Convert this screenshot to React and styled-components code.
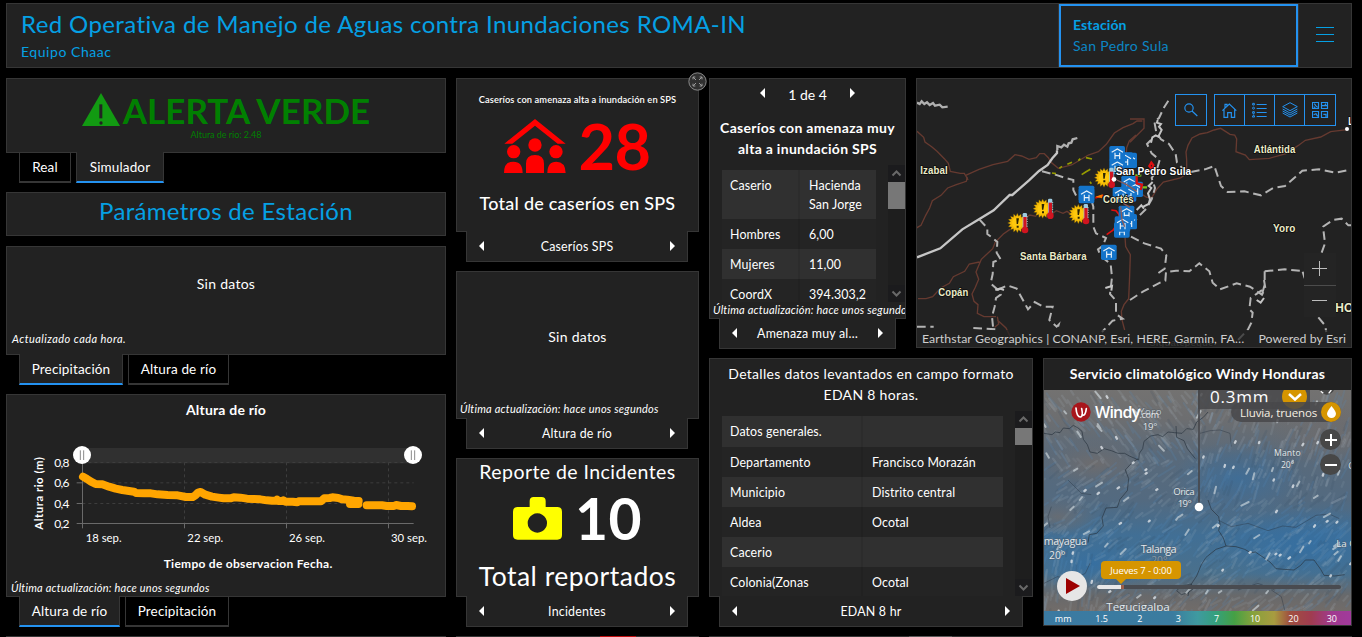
import React from 'react';
import styled, { createGlobalStyle, css } from 'styled-components';

const BORDER = '#363636';
const PANEL = '#222222';
const BLUE = '#2492f0';
const SKY = '#05a0e4';

const GlobalStyle = createGlobalStyle`
  * { box-sizing: border-box; }
  html, body { margin: 0; background: #000; overflow: hidden; }
  body { font-family: Lato, "Liberation Sans", sans-serif; color: #fff; font-size: 14px; letter-spacing: 0.27px; }
  svg { display: block; }
`;

/* ---------- layout ---------- */
const Page = styled.div`
  width: 1362px; height: 637px; overflow: hidden; background: #000;
  padding: 3px 10px 0 6px; display: flex; flex-direction: column;
`;
const Header = styled.header`
  height: 65px; flex: none; background: ${PANEL}; border: 1px solid ${BORDER};
  display: flex; color: ${SKY};
`;
const Titles = styled.div`flex: 1; padding: 5px 0 0 14px;`;
const Title = styled.h1`
  margin: 0; font-size: 24px; line-height: 30px; font-weight: 400; letter-spacing: 0.39px; white-space: nowrap;
`;
const Subtitle = styled.div`font-size: 14px; line-height: 20px; margin-top: 3px; letter-spacing: 0.55px;`;
const Station = styled.div`
  height: 63px; border: 2px solid ${BLUE}; outline: 1px solid ${BORDER}; width: 239px;
  padding: 8px 0 0 12px; line-height: 21px; white-space: nowrap;
`;
const StationName = styled.div`color: #0c86c4; letter-spacing: 0.35px;`;
const StationLabel = styled.div`font-weight: 700; letter-spacing: 0.12px;`;
const MenuButton = styled.div`
  width: 53px; display: flex; flex-direction: column; align-items: center; justify-content: center; gap: 6px; padding-bottom: 2px;
  i { width: 18px; height: 1px; background: ${SKY}; }
`;
const Main = styled.main`display: flex; gap: 10px; margin-top: 10px; height: 549px; flex: none;`;
const Column = styled.div`width: ${p => p.$w}px; display: flex; flex-direction: column; gap: 9px; flex: none;`;
const RowPair = styled.div`display: flex; gap: 10px;`;
const Stack = styled.section`
  position: relative; width: ${p => p.$w || '100%'}; margin-top: ${p => p.$mt || 0}px;
  display: flex; flex-direction: column; flex: none;
`;
const Panel = styled.div`
  height: ${p => p.$h}px; background: ${PANEL}; border: 1px solid ${BORDER};
  display: flex; flex-direction: column; overflow: hidden; flex: none;
`;
const PeekRow = styled.div`
  display: flex; gap: 10px; margin-top: 9px; height: 1px; flex: none;
`;
const Peek = styled.div`
  width: ${p => p.$w}px; display: flex; background: ${BORDER}; padding-left: ${p => p.$pl || 0}px;
`;
const PeekMark = styled.i`width: ${p => p.$w}px; background: ${p => p.$c};`;

/* ---------- tabs ---------- */
const Tabs = styled.nav`display: flex; gap: 5px; margin: -1px 0 0 13px; height: 31px;`;
const Tab = styled.div`
  border: 1px solid ${BORDER}; border-bottom: 2px solid ${p => (p.$on ? BLUE : BORDER)};
  border-top: ${p => (p.$on ? '0' : `1px solid ${BORDER}`)};
  background: ${p => (p.$on ? PANEL : '#000')};
  width: ${p => p.$w}px; text-align: center; line-height: ${p => (p.$on ? 30 : 28)}px; font-size: 13.5px; letter-spacing: 0.15px;
`;
const Pager = styled.nav`
  height: 31px; margin: -1px 10px 0; background: ${PANEL}; border: 1px solid ${BORDER}; border-top: 0;
  display: flex; align-items: center; justify-content: space-between; padding: 0 12px; font-size: 12.4px; letter-spacing: 0.2px;
  white-space: nowrap; margin-right: ${p => p.$mr ?? 11}px;
`;
const Arrow = styled.i`
  width: 0; height: 0; border: 5px solid transparent; flex: none;
  ${p => p.$right
    ? css`border-left: 5.5px solid #fff; border-right: 0;`
    : css`border-right: 5.5px solid #fff; border-left: 0;`}
`;
const PagerBar = ({ children, mr }) => (
  <Pager $mr={mr}><Arrow /><span>{children}</span><Arrow $right /></Pager>
);

/* ---------- left column ---------- */
const AlertRow = styled.div`
  display: flex; justify-content: center; margin-top: 10px; height: 41px; padding-right: 0;
  font-size: 35px; line-height: 42px; font-weight: 700; color: #018001; letter-spacing: 0.05px; gap: 3px;
  svg { margin-top: 4px; }
`;
const AlertNote = styled.div`
  font-size: 9px; line-height: 10px; color: #018001; text-align: center; letter-spacing: -0.03px;
`;
const SectionTitle = styled.h2`
  margin: 0; font-size: 24px; line-height: 36px; font-weight: 400; color: ${SKY}; text-align: center; letter-spacing: 0.32px;
`;
const Empty = styled.div`height: ${p => p.$h}px; display: flex; align-items: center; justify-content: center; flex: none;`;
const Note = styled.div`
  font-style: italic; font-size: 11px; line-height: 16px; letter-spacing: ${p => p.$ls || 0.22}px; white-space: nowrap;
  padding-left: ${p => p.$pl || 4}px; margin-top: ${p => p.$mt || 0}px; overflow: hidden;
`;
const ChartTitle = styled.div`font-weight: 700; line-height: 30px; text-align: center; letter-spacing: 0.2px;`;

/* ---------- indicators ---------- */
const Indicator = styled.div`display: flex; flex-direction: column; align-items: center; white-space: nowrap;`;
const Caption = styled.div`
  margin-top: ${p => p.$mt}px; line-height: ${p => p.$lh}px; font-size: ${p => p.$fs}px; font-weight: ${p => p.$fw || 400};
  letter-spacing: ${p => p.$ls}px;
`;
const Figure = styled.div`
  height: 56px; display: flex; align-items: center; gap: ${p => p.$gap}px; margin-top: ${p => p.$mt}px;
  color: ${p => p.$c}; font-size: ${p => p.$fs}px; line-height: 56px; font-weight: ${p => p.$fw}; letter-spacing: ${p => p.$ls || 0}px;
`;
const ExpandBadge = styled.div`
  position: absolute; right: -8px; top: -6px; width: 19px; height: 19px; z-index: 2;
`;

/* ---------- details ---------- */
const DetailPager = styled.div`
  display: flex; align-items: center; justify-content: center; gap: 23px; height: 28px; letter-spacing: 0; flex: none;
  span { padding-top: 2px; }
`;
const DetailTitle = styled.div`
  margin-top: ${p => p.$mt}px; line-height: 21px; height: 42px; text-align: center; font-weight: ${p => p.$fw}; letter-spacing: 0.3px; flex: none;
`;
const ScrollArea = styled.div`
  display: flex; justify-content: space-between; margin-top: 6px; height: ${p => p.$h}px; padding-left: 12px; overflow: hidden; flex: none;
`;
const Table = styled.div`width: ${p => p.$w}px; margin-top: 5px; font-size: 12.4px; line-height: 19px; letter-spacing: 0.12px;`;
const TableRow = styled.div`
  display: grid; grid-template-columns: ${p => p.$c1}px 1fr; min-height: ${p => p.$min || 30}px;
  background: ${p => (p.$odd ? '#303030' : '#242424')};
  div { padding: 6px 0 5px 8px; white-space: pre-line; }
  div + div { border-left: 2px solid ${p => (p.$odd ? '#2c2c2c' : '#212121')}; padding-left: 9px; white-space: ${p => p.$wrap ? 'pre-line' : 'nowrap'}; }
`;
const Scrollbar = styled.div`
  width: 17px; background: #1e1e1e; display: flex; flex-direction: column; align-items: center;
  svg { flex: none; background: #1b1b1d; }
`;
const Thumb = styled.i`width: 17px; height: ${p => p.$h}px; background: #777; margin-bottom: auto; flex: none;`;

const ScrollRail = ({ thumb }) => (
  <Scrollbar>
    <svg width="17" height="17"><path d="M4.5 10.5l4-4 4 4" fill="none" stroke="#696969" strokeWidth="2" /></svg>
    <Thumb $h={thumb} />
    <svg width="17" height="17"><path d="M4.5 6.5l4 4 4-4" fill="none" stroke="#696969" strokeWidth="2" /></svg>
  </Scrollbar>
);

const DetailTable = ({ rows, w, c1, firstMin }) => (
  <Table $w={w}>
    {rows.map(([k, v], i) => (
      <TableRow key={k} $odd={i % 2 === 0} $c1={c1} $min={i === 0 ? firstMin : 30} $wrap={i === 0}>
        <div>{k}</div><div>{v}</div>
      </TableRow>
    ))}
  </Table>
);

/* ---------- chart ---------- */
const riverLevel = 'M249 260l12 7 12 8 14 7 20 1 20 7 20 6 20 4 20 3 15 2 6 4 25 1 20 0 20 3 30 2 30 1 25 5 20 0 8-5 8-8 8-2 14 8 20 6 20 3 15 2 20 0 10-3 20 1 20 3 20 1 20 1 20 3 15 1 12 0 3-3 4 4 12 0 3-2 6 4 22 0 14 2 4-3 20 0 35 0 12 0 10-9 16-1 8-2 18 2 12 4 15 1 20 3 14 1';

const RiverChart = () => (
  <svg width="438" height="155" viewBox="21 105 1314 465" fontFamily="Lato, sans-serif" fill="#fff">
    <rect x="247" y="174" width="993" height="46" fill="#303030" />
    <g stroke="#3d3d3d" strokeWidth="3" strokeDasharray="9 9" fill="none">
      <path d="M247 217.500H1241M247 278.500H1241M247 340.500H1241M553.500 217V400M859.500 217V400M1165.500 217V400" />
    </g>
    <path d="M247.500 217V415M230 400.500H1241M230 278.500h17M230 340.500h17M553.500 400v15M859.500 400v15M1165.500 400v15" stroke="#6a6a6a" strokeWidth="3" fill="none" />
    <path d={riverLevel} fill="none" stroke="#ffa500" strokeWidth="24" strokeLinecap="round" strokeLinejoin="round" />
    <path d="M1050 342h25M1100 346h46l14 2h22l6-3 15 3h20l13 1" fill="none" stroke="#ffa500" strokeWidth="24" strokeLinecap="round" strokeLinejoin="round" />
    {[246, 1239].map(x => (
      <g key={x}>
        <circle cx={x} cy="195" r="27" fill="#fff" />
        <path d={`M${x - 5} 181v29M${x + 5} 181v29`} stroke="#8a8a8a" strokeWidth="3" />
      </g>
    ))}
    <g fontSize="36">
      {[['0,8', 230], ['0,6', 291], ['0,4', 353], ['0,2', 414]].map(([t, y]) => (
        <text key={t} x="163" y={y} textLength="46">{t}</text>
      ))}
      {[['18 sep.', 257], ['22 sep.', 562], ['26 sep.', 867], ['30 sep.', 1173]].map(([t, x]) => (
        <text key={t} x={x} y="457" fontSize="34" textLength="108">{t}</text>
      ))}
    </g>
    <text x="491" y="534" fontSize="36" fontWeight="700" textLength="506">Tiempo de observacion Fecha.</text>
    <text transform="translate(129 419) rotate(-90)" fontSize="34" fontWeight="700" textLength="218">Altura rio (m)</text>
  </svg>
);

/* ---------- region map ---------- */
const MapPanel = styled.div`
  position: relative; width: 436px; height: 270px; border: 1px solid ${BORDER}; background: ${PANEL}; overflow: hidden;
`;
const MapTools = styled.div`position: absolute; top: 15px; right: 15px; display: flex; gap: 7px;`;
const ToolGroup = styled.div`display: flex; border: 1px solid ${BLUE}; height: 32px; background: ${PANEL};`;
const Tool = styled.div`
  width: ${p => p.$w || 30}px; display: grid; place-items: center; color: ${BLUE};
  & + & { border-left: 1px solid ${BLUE}; }
`;
const ZoomTools = styled.div`
  position: absolute; right: 15px; top: 174px; width: 32px; background: #242424;
  div { height: 32px; padding: 0 1px 2px 0; display: grid; place-items: center; }
  div + div { border-top: 1px solid #4c4c4c; }
`;
const Attribution = styled.div`
  position: absolute; left: 0; right: 0; bottom: 0; height: 17px; background: rgba(34,34,34,.72); color: #cfcfcf;
  display: flex; justify-content: space-between; padding: 0 5px; font-size: 12.3px; line-height: 17px; letter-spacing: 0.08px; white-space: nowrap;
`;

const sunPoints = Array.from({ length: 32 }, (_, i) => {
  const r = i % 2 ? 21 : 29, a = (i * Math.PI) / 16;
  return `${(r * Math.cos(a)).toFixed(1)},${(r * Math.sin(a)).toFixed(1)}`;
}).join(' ');

const Sensor = ({ x, y }) => (
  <g transform={`translate(${x} ${y})`}>
    <polygon points={sunPoints} fill="#f5bb06" stroke="#6d5200" strokeWidth="1" />
    <circle r="16" fill="#ffc90c" />
    <path d="M-3-14h8l-3 17h-4zM-2 8h6v6h-6z" fill="#2a2304" />
    <rect x="16" y="-30" width="13" height="50" rx="4" fill="#9ecbe0" />
    <path d="M18-18h10v34h-10z" fill="#d01420" />
    <circle cx="23" cy="21" r="10" fill="#d01420" />
    <path d="M30-20v32" stroke="#dff" strokeWidth="2" strokeDasharray="3 4" />
  </g>
);
const Shelter = ({ x, y }) => (
  <g transform={`translate(${x} ${y})`}>
    <rect x="-24" y="-23" width="47" height="46" rx="5" fill="#1474ca" />
    <path d="M-17-4L0-14 17-4M-7-3v19M7-3v19M-7 6h14" fill="none" stroke="#e8f2fa" strokeWidth="3.500" />
  </g>
);
const PlaceName = ({ x, y, w, size = 30, fill = '#ecedc9', children }) => (
  <text x={x} y={y} textLength={w} fontSize={size} fill={fill} lengthAdjust="spacingAndGlyphs">{children}</text>
);

const RegionMap = () => (
  <svg width="434" height="268" viewBox="21 27 1302 804" fill="none">
    <g stroke="#663a30" strokeWidth="4">
      <path d="M21 184l20 18 4 14 20 14 16 14 22 22 12 14 6 24 30 6 12 0 8 14-2 10-30 10-26 10-20 22-26 16-8 22-12 22-14 30-14 8" />
      <path d="M167 316l40-18 42-14 44-10 22-20 20 4 22 10 22-5 10-12 14 0 12 12 8 14 22 18 40-10 20-12 30-18 30-10 24-22 24-34 26-16 30-12 12-8h16" />
      <path d="M170 320l4 10 M300 478l-20 14-24 24-8 20-34 32-6 14-10 24 8 22-10 24-10 20 6 22 12 10-2 26 20 10 36 0M208 576l-30 6-14 22-34 16-12 20-26 14-24 26-20 6-24 0M262 740l4 22-12 10M262 750l26 24 20 40M345 445l14-10 20 4M425 432l14-10 20 8 12-6 14 10" />
      <path d="M678 195l-20 18-8 20-2 30M645 500l2 30 14 24-2 62-3 70-14 18-8 20 2 26 8 30" />
      <path d="M660 147h42v28l-42 42M660 350l50 32 16 0 14-24 20-22 52-12 18-14 0-40-2-24 6-20 12-22 24-12 22-4 20-8 20-5 28 18 14 2 6 12-2 38 28 10 12 14 60-4 50-14 36-24 22-16 46-10 30-16 50-6" />
    </g>
    <path d="M21 562l70-27 66-57 50-30 44-27 48-46h8l50-44 30-28 26-18 14-20 14-16v-8" stroke="#c6c6c6" strokeWidth="7" />
    <path d="M442 240v-12l12 4 8-8 10 6 4-10 8-2 4-10 14-4M21 98l8 4 6-8 8 8 8-5 8 8 10-6 6 8 14-3 8 8 16-2" stroke="#b0b0b0" strokeWidth="7" />
    <g stroke="#b4b4b4" strokeWidth="6" strokeDasharray="26 14">
      <path d="M396 304l40 10 30 10 24 6 0 30 12 24 42 6 6 20 0 60 8 20 30 14-10 24-14 10 8 20 30 24 4 40-6 50 18 20 0 40 20 14-30 6-32 34" />
      <path d="M208 448l24 26 0 18 16 12 14 12-2 32 12 20-22 8-2 36-6 28 22 20 8 14-14 10-4 26-8 30 4 40" />
      <path d="M262 660l30-14 28 10 20 36 14 26 20-22 26 14 28 0-10 40 22 20 6-6-4 14M21 770h50M190 774l70 4M660 690l40-26 50-26 16-6 2-26 30-4 40 2 30-24 30 24 10 34 22 20 50-18 40 10 36 24 10-20-4-24M1056 660l-14 10-20 14-4 34 10 10-4 30-10 20-30 32M1064 604l60-6 60 6M1064 604v40l-10 36" />
      <path d="M775 92l-14 22-14 30-14 10 6 34 14 20 24 14 20 30 4 26 30 30 54-10 28-10 8 24 12 36 20 18 50-2 50 12 36-22 36-6 30-26 22-20 50-4 50 10 40-8M723 210l-12 12 14 28 24 20-10 34-14 20 10 30-10 34-16 28-20 20-22 24-10 20M663 500l40 20 50 16 16 20-5 40-20 14M1235 548l10-28-6-50 30-20 26-4 20 20 12 0M1225 742l20 24 4 20M1178 605l6 20" />
    </g>
    <path d="M723 218l4-16 10-6 8 4 10-20-8-10 6-8-12-4 2-8M700 410l16-8 4-14-6-18 10-16-8-6 12-12M680 420l14-14 8 10M586 654l20-6-2 14M256 660l14-4 12 4M1040 690l12 8 10-14" stroke="#c4c4c4" strokeWidth="6" />
    <path d="M426 309l12 2M448 295l8-6M472 283l14-6M505 272l6-6M528 263l18 4M515 314l12-8 14-8M540 335l4 6" stroke="#979c00" strokeWidth="5" />
    <path d="M556 384l24-8 M590 494l20-14 6-10M604 420l14 2 8 10 6 16" stroke="#e01010" strokeWidth="5" />
    <path d="M556 380l22-7-2 12z" fill="#ff7a00" />
    {[[658, 271], [646, 270], [622, 290], [622, 251], [530, 370], [530, 377], [658, 340], [676, 358], [656, 372], [632, 374], [658, 455], [650, 430], [636, 480], [638, 462], [597, 547]].map(([x, y], i) => <Shelter key={i} x={x} y={y} />)}
    {[[322, 459], [398, 416], [505, 432], [582, 323]].map(([x, y]) => <Sensor key={x} x={x} y={y} />)}
    <path d="M632 410l4 40 8 20M620 330l30 14 30 20M640 400l20 12" stroke="#8a5a58" strokeWidth="4" />
    <path d="M650 316l14-10M676 316h18M697 352h14" stroke="#7dc21c" strokeWidth="7" />
    <path d="M680 318v22l16 4-4 16M718 288l6-10 6 8-4 12z" stroke="#dd1111" strokeWidth="7" />
    <circle cx="612" cy="328" r="7" fill="#fff" />
    <circle cx="1311" cy="177" r="6" fill="#fff" />
    <g fontFamily="Liberation Sans, sans-serif" fontWeight="700" stroke="#0c0c0c" strokeWidth="5" paintOrder="stroke" strokeLinejoin="round">
      <PlaceName x={31} y={311} w={82}>Izabal</PlaceName>
      <PlaceName x={330} y={570} w={200}>Santa Bárbara</PlaceName>
      <PlaceName x={85} y={677} w={90}>Copán</PlaceName>
      <PlaceName x={579} y={399} w={92}>Cortés</PlaceName>
      <PlaceName x={617} y={316} w={227} fill="#fff">San Pedro Sula</PlaceName>
      <PlaceName x={1031} y={249} w={125}>Atlántida</PlaceName>
      <PlaceName x={1089} y={486} w={67}>Yoro</PlaceName>
      <PlaceName x={1276} y={725} w={54} size={38}>HO</PlaceName>
      <PlaceName x={1315} y={166} w={15} fill="#fff">L</PlaceName>
      <PlaceName x={718} y={828} w={192} fill="#5c5c5c" size={26}>Siguatepeque</PlaceName>
    </g>
  </svg>
);

const SearchIcon = () => (
  <svg width="14" height="14" viewBox="0 0 42 42" fill="none" stroke="currentColor" strokeWidth="3.500"><circle cx="15" cy="15" r="12.500" /><path d="M24 24l16 15" /></svg>
);
const HomeIcon = () => (
  <svg width="15" height="15" viewBox="0 0 45 45" fill="none" stroke="currentColor" strokeWidth="3.500"><path d="M1 23L22 3l21 20M6 19v24h11V29h11v14h10V19M9 15V4h6v5" /></svg>
);
const LegendIcon = () => (
  <svg width="15" height="16" viewBox="0 0 45 48" fill="none" stroke="currentColor" strokeWidth="3"><path d="M14 7.500h30M14 19.500h30M14 31.500h30M14 43.500h30" /><path d="M2 4h5v5H2zM2 29h5v5H2zM1 45l4-7 3 7z" /><circle cx="4.500" cy="18.500" r="3" /></svg>
);
const LayersIcon = () => (
  <svg width="16" height="16" viewBox="0 0 48 48" fill="none" stroke="currentColor" strokeWidth="3"><path d="M24 2l22 12-22 12L2 14zM2 21l22 12 22-12M2 27l22 12 22-12M2 33l22 12 22-12" /></svg>
);
const BasemapIcon = () => (
  <svg width="17" height="17" viewBox="0 0 51 51" fill="none" stroke="currentColor" strokeWidth="3.500"><path d="M1.500 1.500h18v18h-18zM28.500 1.500h18v18h-18zM1.500 28.500h18v18h-18zM28.500 28.500h18v18h-18zM7 5l4 6 6 5M5 14l5 3M30 11h8l4-6M38 11h10M5 38l7-3 5 8M34 37h8v9" /></svg>
);

/* ---------- wind map ---------- */
const WeatherPanel = styled.div`
  width: 309px; height: 268px; border: 1px solid ${BORDER}; background: ${PANEL}; display: flex; flex-direction: column;
  font-family: "Open Sans", "Noto Sans", sans-serif;
`;
const WeatherTitle = styled.div`
  height: 31px; line-height: 30px; text-align: center; font-family: Lato, sans-serif; font-weight: 700; letter-spacing: 0.3px; flex: none;
`;
const WindCanvas = styled.div`position: relative; height: 221px; overflow: hidden; letter-spacing: 0;`;
const Brand = styled.div`
  position: absolute; left: 27px; top: 12px; display: flex; align-items: center; height: 20px; font-size: 16px; line-height: 20px;
  svg { margin-right: 4px; }
  span { letter-spacing: -0.75px; font-weight: 600; }
  small { font-size: 9px; margin-top: 5px; opacity: .8; letter-spacing: -.3px; }
`;
const RainCard = styled.div`
  position: absolute; left: 154px; top: 0; width: 112px; height: 19px; background: rgba(72,72,74,.85);
  padding-left: 12px; font: 17px/13px "Open Sans", sans-serif; letter-spacing: 0.8px;
`;
const LayerPill = styled.div`
  position: absolute; right: 10px; top: 12px; height: 20px; width: 110px; border-radius: 10px; background: rgba(72,72,74,.85);
  font-size: 11.5px; line-height: 21px; padding-left: 9px; white-space: nowrap; color: #f6efe2; letter-spacing: -0.1px;
`;
const RoundButton = styled.div`
  position: absolute; left: ${p => p.$x}px; top: ${p => p.$y}px; width: ${p => p.$d}px; height: ${p => p.$d}px; border-radius: 50%;
  background: ${p => p.$c || '#474747'}; display: grid; place-items: center;
`;
const TimeTip = styled.div`
  position: absolute; left: 57px; top: 171px; width: 80px; height: 18px; border-radius: 4px; background: #d69500;
  font-size: 9.5px; font-weight: 500; line-height: 19px; text-align: center; letter-spacing: -0.1px; white-space: nowrap;
  &::after { content: ''; position: absolute; left: 15px; top: 18px; border: 5px solid transparent; border-top-color: #d69500; border-bottom: 0; }
`;
const Timeline = styled.div`
  position: absolute; left: 53px; top: 195px; width: 244px; height: 4px; border-radius: 2px; background: #494b50; overflow: hidden;
  i { display: block; height: 4px; width: 27px; background: #e8e8e8; border-right: 3px solid #9c5f4c; }
`;
const Scale = styled.div`
  height: 14px; display: grid; grid-template-columns: repeat(8, 1fr); text-align: center; font-size: 9px; line-height: 15px; font-weight: 500; letter-spacing: 0;
  background: linear-gradient(90deg, #3b7aa2 0, #3b7c9f 42%, #3f9aa0 50%, #35a07c 56%, #45a045 62%, #86a23c 68%, #a89c40 75%, #a05040 80%, #a03c50 87%, #a03a90 94%, #a13a9c 100%);
`;

let seed = 7;
const rnd = () => { seed = (seed * 16807) % 2147483647; return seed / 2147483647; };
const streak = (len) => {
  const x = 10 + rnd() * 930, y = 120 + rnd() * 670;
  const lean = y > 430 ? (x < 180 && y > 600 ? 1.4 : 0.5 + rnd() * 0.5) : x > 480 ? 1.2 : y > 330 ? 0.6 : 2.2;
  const a = lean + (rnd() - 0.5) * 0.3;
  return `M${x.toFixed(0)} ${y.toFixed(0)}l${(-Math.cos(a) * len).toFixed(1)} ${(Math.sin(a) * len).toFixed(1)}`;
};
const makeStreaks = (n, lo, hi) => Array.from({ length: n }, () => streak(lo + rnd() * (hi - lo))).join('');
const paleStreaks = Array.from({ length: 5 }, () => makeStreaks(140, 10, 45));
const blueStreaks = makeStreaks(360, 20, 60);
const darkStreaks = makeStreaks(160, 14, 45);
const brightStreaks = makeStreaks(55, 8, 26);
const dots = makeStreaks(45, 3, 6);

const WindMap = () => (
  <svg width="307" height="221" viewBox="18 120 921 663" fill="none">
    <defs>
      <linearGradient id="sky" x1="0" y1="0" x2="0" y2="1">
        <stop offset="0" stopColor="#737271" /><stop offset=".13" stopColor="#6d6e70" /><stop offset=".3" stopColor="#596a7b" />
        <stop offset=".5" stopColor="#536a80" /><stop offset=".66" stopColor="#416f95" /><stop offset=".83" stopColor="#4a708c" />
        <stop offset=".93" stopColor="#68696b" /><stop offset="1" stopColor="#716c69" />
      </linearGradient>
      <radialGradient id="rain"><stop offset="0" stopColor="#346fa3" stopOpacity=".85" /><stop offset="1" stopColor="#346fa3" stopOpacity="0" /></radialGradient>
      <radialGradient id="dry"><stop offset="0" stopColor="#6d6c6e" /><stop offset="1" stopColor="#6d6c6e" stopOpacity="0" /></radialGradient>
    </defs>
    <rect x="18" y="120" width="921" height="663" fill="url(#sky)" />
    <ellipse cx="600" cy="385" rx="200" ry="110" fill="url(#rain)" opacity=".75" />
    <ellipse cx="800" cy="590" rx="300" ry="120" fill="url(#rain)" />
    <ellipse cx="170" cy="640" rx="200" ry="80" fill="url(#rain)" />
    <ellipse cx="170" cy="340" rx="170" ry="70" fill="url(#dry)" />
    <ellipse cx="880" cy="260" rx="180" ry="90" fill="url(#dry)" />
    <ellipse cx="60" cy="500" rx="120" ry="60" fill="url(#dry)" opacity=".8" />
    <path d={darkStreaks} stroke="#30475c" strokeOpacity=".13" strokeWidth="7" strokeLinecap="round" />
    <path d={blueStreaks} stroke="#4f8fc4" strokeOpacity=".16" strokeWidth="6" strokeLinecap="round" />
    {paleStreaks.map((d, i) => (
      <path key={i} d={d} stroke="#b4c2cc" strokeOpacity={0.08 + i * 0.02} strokeWidth="7" strokeLinecap="round" />
    ))}
    <g stroke="#28323e" strokeOpacity=".65" strokeWidth="3" strokeLinejoin="round">
      <path d="M18 250l24 4 10-8 14 2 10-14 18 2 12-10 14 8 12 10 4 24 12 16 8 22 22 4 20-14 22 6 20 8 20 0 14 8 28 12 2-20 10-14 4-22 20-16 22-4 14 6 16-14 20 2 22 2 14-14 20 2 10-22 20-14 14-16" />
      <path d="M300 326l-20 14-18 20 10 26-4 36-22 26-8 24-34 2-12 30 4 24-20 22-22 4-4 24M414 228l2 34 22 10 10 24 24 30" />
      <path d="M510 450l10 28 22 22 4 22-4 20 14 22 8 24 30 2 26 8 18 10 14-2 24 16 20 14 18 20 24 2 30 2 20-14 14-16 26 0 20 28 10 18 32 2 30-4M564 588l-30 10-30 24-14 22-14 34-20 30-6 30M450 728l14-10-4-16-30 6-14 14 14 12z" />
      <path d="M486 250l30-8 30-2 30 10 4 40M540 510l40 20 50-10 60 22 44-14 40 4 60-36 40-4 30 14M18 700l40-20 44 10 40-20 14-30M40 470l-10 30 6 34M90 390l40 40 30 4M700 720l30 20 10 40M600 720l60-20 50 20" strokeOpacity=".4" />
    </g>
    <path d={brightStreaks} stroke="#cfd8dd" strokeOpacity=".65" strokeWidth="6" strokeLinecap="round" />
    <path d={dots} stroke="#dfe4e8" strokeOpacity=".8" strokeWidth="7" strokeLinecap="round" />
    <path d="M483 120V470" stroke="#47484c" strokeWidth="5" />
    <circle cx="483" cy="471" r="13" fill="#fff" />
    <g fill="#e2e8ec" stroke="#4c5a66" strokeOpacity=".5" strokeWidth="4" paintOrder="stroke" fontFamily="Open Sans, sans-serif" fontWeight="400" fontSize="29">
      <text x="303" y="196" textLength="68" fillOpacity=".75">Yoro</text><text x="314" y="239" textLength="44">19°</text>
      <text x="406" y="434" textLength="64">Orica</text><text x="419" y="472" textLength="42">19°</text>
      <text x="708" y="318" textLength="80" fontSize="26">Manto</text><text x="729" y="355" textLength="40" fontSize="26">20°</text>
      <text x="17" y="585" textLength="130" fontSize="32">mayagua</text><text x="33" y="628" textLength="49" fontSize="31">20°</text>
      <text x="308" y="609" textLength="108" fontSize="33">Talanga</text><text x="340" y="643" textLength="48" fontSize="31" fillOpacity=".4">20°</text>
      <text x="895" y="591">La C</text>
      <text x="205" y="784" textLength="190" fontSize="35">Tegucigalpa</text>
      <text x="931" y="356" fontSize="26">G</text>
    </g>
    <circle cx="866" cy="110" r="24" fill="#474747" />
    <path d="M848 124l8 6M880 120l-8 10" stroke="#fff" strokeWidth="4" />
  </svg>
);

/* ---------- content ---------- */
const exposedVillage = [
  ['Caserio', 'Hacienda\nSan Jorge'], ['Hombres', '6,00'], ['Mujeres', '11,00'], ['CoordX', '394.303,2'],
];
const fieldReport = [
  ['Datos generales.', ''], ['Departamento', 'Francisco Morazán'], ['Municipio', 'Distrito central'],
  ['Aldea', 'Ocotal'], ['Cacerio', ''], ['Colonia(Zonas', 'Ocotal'],
];

export default function App() {
  return (
    <>
      <GlobalStyle />
      <Page>
        <Header>
          <Titles>
            <Title>Red Operativa de Manejo de Aguas contra Inundaciones ROMA-IN</Title>
            <Subtitle>Equipo Chaac</Subtitle>
          </Titles>
          <Station>
            <StationLabel>Estación</StationLabel>
            <StationName>San Pedro Sula</StationName>
          </Station>
          <MenuButton><i /><i /><i /></MenuButton>
        </Header>

        <Main>
          <Column $w={440}>
            <Stack>
              <Panel $h={75}>
                <AlertRow>
                  <svg width="38" height="33" viewBox="0 0 114 99">
                    <path d="M57 0l57 99H0z" fill="#129a12" />
                    <path d="M52 34h9v42h-9z" fill={PANEL} /><circle cx="57" cy="90" r="5" fill={PANEL} />
                  </svg>
                  ALERTA VERDE
                </AlertRow>
                <AlertNote>Altura de rio: 2.48</AlertNote>
              </Panel>
              <Tabs><Tab $w={52}>Real</Tab><Tab $w={88} $on>Simulador</Tab></Tabs>
            </Stack>
            <Panel $h={44}><SectionTitle>Parámetros de Estación</SectionTitle></Panel>
            <Stack $mt={1}>
              <Panel $h={109}>
                <Empty $h={73}>Sin datos</Empty>
                <Note $mt={11} $pl={5} $ls={0.45}>Actualizado cada hora.</Note>
              </Panel>
              <Tabs><Tab $w={104} $on>Precipitación</Tab><Tab $w={101}>Altura de río</Tab></Tabs>
            </Stack>
            <Stack>
              <Panel $h={203}>
                <ChartTitle>Altura de río</ChartTitle>
                <RiverChart />
                <Note>Última actualización: hace unos segundos</Note>
              </Panel>
              <Tabs><Tab $w={101} $on>Altura de río</Tab><Tab $w={104}>Precipitación</Tab></Tabs>
            </Stack>
          </Column>

          <Column $w={243}>
            <Stack>
              <ExpandBadge>
                <svg width="19" height="19" viewBox="0 0 57 57" fill="none">
                  <circle cx="28.500" cy="28.500" r="26" fill="#303030" stroke="#8a8a8a" strokeWidth="3" />
                  <path d="M24 24l-9-9M15 22v-7h7M33 24l9-9M35 15h7v7M24 33l-9 9M15 35v7h7M33 33l9 9M42 35v7h-7" stroke="#9a9a9a" strokeWidth="3" />
                </svg>
              </ExpandBadge>
              <Panel $h={154}>
                <Indicator>
                  <Caption $mt={11} $lh={20} $fs={9.3} $fw={600} $ls={0.1}>Caseríos con amenaza alta a inundación en SPS</Caption>
                  <Figure $mt={8} $gap={12} $c="#ff0000" $fs={63} $fw={700} $ls={-0.5}>
                    <svg width="62" height="54" viewBox="0 0 186 162" fill="#ff0000">
                      <path d="M93 0l92 74h-24L93 20 25 74H1z" />
                      <circle cx="93" cy="78" r="20" /><circle cx="29" cy="98" r="20" /><circle cx="156" cy="98" r="20" />
                      <path d="M66 162v-28q0-26 27-26t27 26v28zM0 162q0-34 28-34t28 34zM130 162q0-34 27-34t28 34z" />
                    </svg>
                    28
                  </Figure>
                  <Caption $mt={14} $lh={30} $fs={18} $fw={500} $ls={0.23}>Total de caseríos en SPS</Caption>
                </Indicator>
              </Panel>
              <PagerBar>Caseríos SPS</PagerBar>
            </Stack>
            <Stack>
              <Panel $h={148}>
                <Empty $h={128}>Sin datos</Empty>
                <Note $mt={1} $pl={3}>Última actualización: hace unos segundos</Note>
              </Panel>
              <PagerBar>Altura de río</PagerBar>
            </Stack>
            <Stack>
              <Panel $h={139}>
                <Indicator>
                  <Caption $mt={1} $lh={24} $fs={19.5} $ls={0.43}>Reporte de Incidentes</Caption>
                  <Figure $mt={6} $gap={13} $c="#ffffff" $fs={57} $fw={700} $ls={0.5}>
                    <svg width="49" height="43" viewBox="0 0 147 129">
                      <path fillRule="evenodd" fill="#ffff00" d="M14 30h36V12Q50 0 62 0h24q12 0 12 12v18h35q14 0 14 14v70q0 14-14 14H14q-14 0-14-14V44q0-14 14-14zM73 49a29 29 0 1 0 .1 0z" />
                    </svg>
                    10
                  </Figure>
                  <Caption $mt={14} $lh={32} $fs={26.5} $ls={0.5}>Total reportados</Caption>
                </Indicator>
              </Panel>
              <PagerBar>Incidentes</PagerBar>
            </Stack>
          </Column>

          <Column $w={643}>
            <RowPair>
              <Stack $w="197px">
                <Panel $h={241}>
                  <DetailPager><Arrow /><span>1 de 4</span><Arrow $right /></DetailPager>
                  <DetailTitle $mt={10} $fw={700}>Caseríos con amenaza muy<br />alta a inundación SPS</DetailTitle>
                  <ScrollArea $h={137}>
                    <DetailTable rows={exposedVillage} w={154} c1={76} firstMin={49} />
                    <ScrollRail thumb={27} />
                  </ScrollArea>
                  <Note $pl={3}>Última actualización: hace unos segundos</Note>
                </Panel>
                <PagerBar mr={10}>Amenaza muy al…</PagerBar>
              </Stack>
              <MapPanel>
                <RegionMap />
                <MapTools>
                  <ToolGroup><Tool><SearchIcon /></Tool></ToolGroup>
                  <ToolGroup>
                    <Tool $w={29}><HomeIcon /></Tool><Tool><LegendIcon /></Tool><Tool><LayersIcon /></Tool><Tool $w={31}><BasemapIcon /></Tool>
                  </ToolGroup>
                </MapTools>
                <ZoomTools>
                  <div><svg width="15" height="15"><path d="M0 7.500h15M7.500 0v15" stroke="#bdbdbd" /></svg></div>
                  <div><svg width="15" height="15"><path d="M0 7.500h15" stroke="#bdbdbd" /></svg></div>
                </ZoomTools>
                <Attribution>
                  <span>Earthstar Geographics | CONANP, Esri, HERE, Garmin, FA…</span><span>Powered by Esri</span>
                </Attribution>
              </MapPanel>
            </RowPair>
            <RowPair>
              <Stack $w="324px">
                <Panel $h={239}>
                  <DetailTitle $mt={4} $fw={400}>Detalles datos levantados en campo formato<br />EDAN 8 horas.</DetailTitle>
                  <ScrollArea $h={185}>
                    <DetailTable rows={fieldReport} w={281} c1={139} firstMin={31} />
                    <ScrollRail thumb={17} />
                  </ScrollArea>
                </Panel>
                <PagerBar mr={10}>EDAN 8 hr</PagerBar>
              </Stack>
              <WeatherPanel>
                <WeatherTitle>Servicio climatológico Windy Honduras</WeatherTitle>
                <WindCanvas>
                  <WindMap />
                  <Brand>
                    <svg width="20" height="20" viewBox="0 0 60 60" fill="none">
                      <circle cx="30" cy="30" r="29" fill="#a8161c" />
                      <path d="M15 18q2 28 14 27 8-2 3-25M33 38q10 6 13-18" stroke="#fff" strokeWidth="5" strokeLinecap="round" />
                    </svg>
                    <span>Windy</span><small>.com</small>
                  </Brand>
                  <RainCard>0.3mm</RainCard>
                  <RoundButton $x={238} $y={-6} $d={25} $c="#d69500">
                    <svg width="14" height="8"><path d="M1 1l6 5.500L13 1" fill="none" stroke="#fff" strokeWidth="2.500" /></svg>
                  </RoundButton>
                  <LayerPill>Lluvia, truenos</LayerPill>
                  <RoundButton $x={277} $y={12} $d={20} $c="#d69500">
                    <svg width="9" height="12" viewBox="0 0 9 12"><path d="M4.500 0Q9 5.500 9 7.800a4.500 4.200 0 0 1-9 0Q0 5.500 4.500 0z" fill="#fff" /></svg>
                  </RoundButton>
                  <RoundButton $x={276} $y={39} $d={21}>
                    <svg width="12" height="12"><path d="M0 6h12M6 0v12" stroke="#fff" strokeWidth="2" /></svg>
                  </RoundButton>
                  <RoundButton $x={276} $y={64} $d={21}>
                    <svg width="12" height="12"><path d="M0 6h12" stroke="#fff" strokeWidth="2" /></svg>
                  </RoundButton>
                  <Timeline><i /></Timeline>
                  <TimeTip>Jueves 7 - 0:00</TimeTip>
                  <RoundButton $x={13} $y={181} $d={30} $c="#e6e6e6">
                    <svg width="18" height="16"><path d="M3 0l14 8-14 8z" fill="#9d0000" /></svg>
                  </RoundButton>
                </WindCanvas>
                <Scale>{['mm', '1.5', '2', '3', '7', '10', '20', '30'].map(v => <span key={v}>{v}</span>)}</Scale>
              </WeatherPanel>
            </RowPair>
          </Column>
        </Main>

        <PeekRow>
          <Peek $w={440} />
          <Peek $w={243} $pl={144}><PeekMark $w={36} $c="#c01010" /></Peek>
          <Peek $w={643} $pl={200}><PeekMark $w={43} $c="#5a5a5a" /></Peek>
        </PeekRow>
      </Page>
    </>
  );
}
